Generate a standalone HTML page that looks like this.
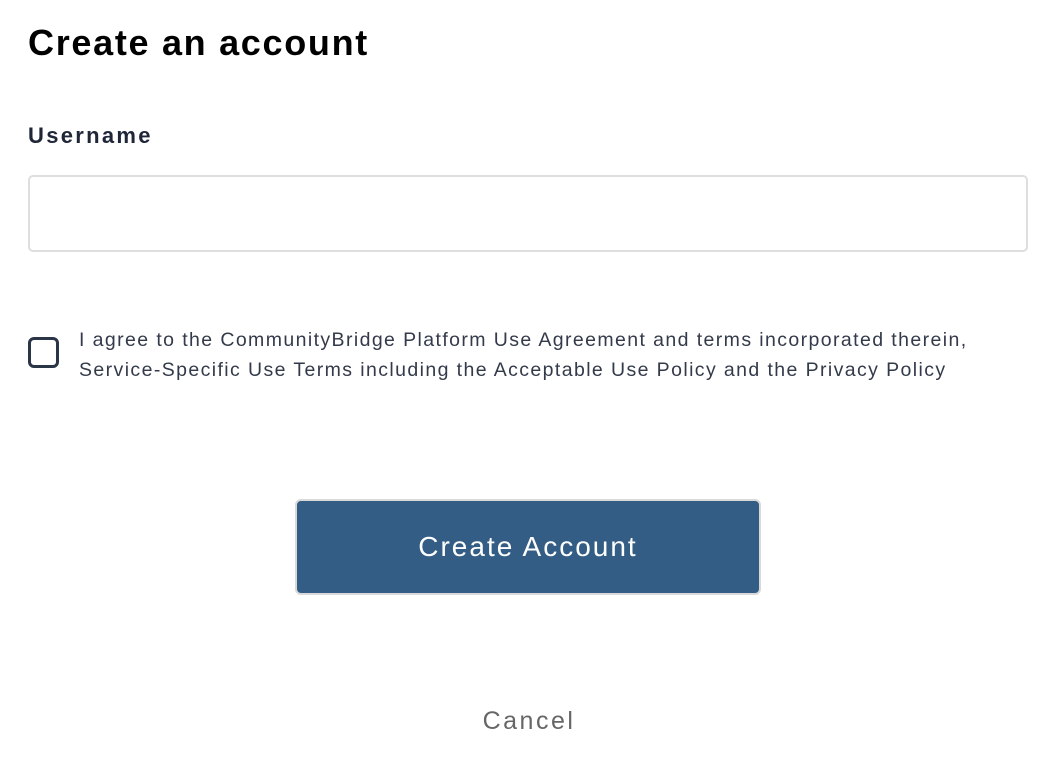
<!DOCTYPE html>
<html><head><style>
body{margin:0;width:1048px;height:766px;background:#fff;font-family:"Liberation Sans",Arial,sans-serif;position:relative;overflow:hidden}
.a{position:absolute;white-space:nowrap}
h1{position:absolute;left:28px;top:22px;margin:0;font-size:36px;font-weight:bold;color:#000;letter-spacing:1.7px}
.lbl{left:28px;top:123px;font-size:22px;font-weight:bold;color:#1f2637;letter-spacing:2.3px}
.inp{position:absolute;left:28px;top:175px;width:996px;height:73px;border:2px solid #dedede;border-radius:5px}
.cb{position:absolute;left:28px;top:337px;width:25px;height:25px;border:3px solid #2a3547;border-radius:6px}
.t{left:79px;font-size:19.5px;color:#333a4a;letter-spacing:1.4px}
.btn{position:absolute;left:295px;top:499px;width:462px;height:92px;background:#335d85;border:2px solid #d9d9d9;border-radius:6px;color:#fff;font-size:28px;text-align:center;line-height:92px;letter-spacing:2px}
.c{left:0;width:1058px;text-align:center;top:707px;font-size:25px;color:#666;letter-spacing:2.5px}
</style></head><body>
<h1>Create an account</h1>
<div class="a lbl">Username</div>
<div class="inp"></div>
<div class="cb"></div>
<div class="a t" style="top:329px">I agree to the CommunityBridge Platform Use Agreement and terms incorporated therein,</div>
<div class="a t" style="top:359px">Service-Specific Use Terms including the Acceptable Use Policy and the Privacy Policy</div>
<div class="btn">Create Account</div>
<div class="a c">Cancel</div>
</body></html>
